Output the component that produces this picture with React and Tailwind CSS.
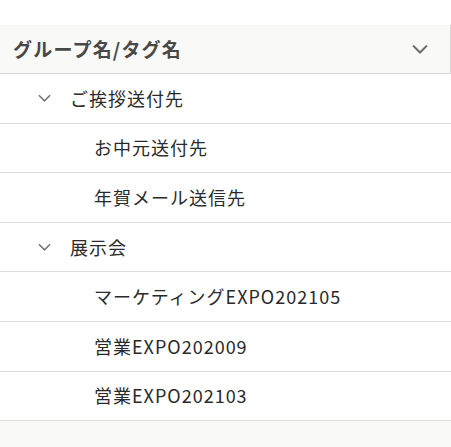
import React from 'react';

const groups = [
  { name: 'ご挨拶送付先', tags: ['お中元送付先', '年賀メール送信先'] },
  { name: '展示会', tags: ['マーケティングEXPO202105', '営業EXPO202009', '営業EXPO202103'] },
];

const Chevron = ({ className }) => (
  <svg viewBox="0 0 16 10" className={className} fill="none" stroke="currentColor" strokeWidth="2">
    <path d="M1 1.5l7 7 7-7" />
  </svg>
);

export default function App() {
  return (
    <div
      className="w-[451px] h-[447px] bg-[#f9f9f7] text-[18px] tracking-[1px] text-[#2a2a2a]"
      style={{ fontFamily: '"Noto Sans CJK JP", "Noto Sans", sans-serif' }}
    >
      <div className="h-[25px] bg-white" />
      {/* header */}
      <div className="h-[49px] flex items-center justify-between border-b border-r border-[#d6d6d4] pl-[13px] pr-[22px]">
        <span className="font-bold text-[19px] text-[#4a4846] tracking-[1.2px]">グループ名/タグ名</span>
        <Chevron className="w-[16px] h-[10px] text-[#6e6e6e]" />
      </div>
      <div className="bg-white">
        {groups.map((g) => (
          <div key={g.name}>
            <div className="h-[49.6px] flex items-center border-b border-[#dcdcdc] pl-[38px]">
              <Chevron className="w-[13px] h-[8px] text-[#777] mr-[19px]" />
              <span>{g.name}</span>
            </div>
            {g.tags.map((t) => (
              <div key={t} className="h-[49.6px] flex items-center border-b border-[#dcdcdc] pl-[94px]">
                <span>{t}</span>
              </div>
            ))}
          </div>
        ))}
      </div>
    </div>
  );
}
